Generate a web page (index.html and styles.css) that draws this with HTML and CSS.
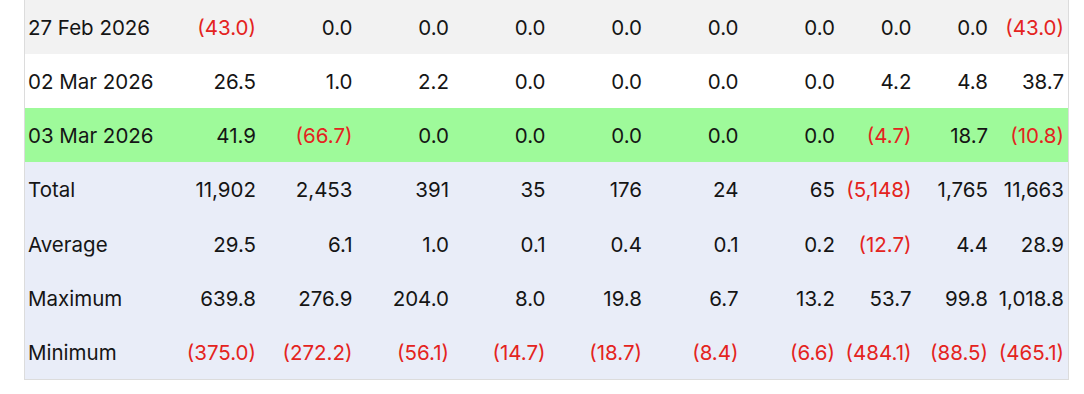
FILE: index.html
```html
<!DOCTYPE html>
<html lang="en">
<head>
<meta charset="utf-8">
<title>Daily table</title>
<link rel="stylesheet" href="styles.css">
</head>
<body>
<div class="wrap">
<table class="grid">
<colgroup>
<col class="c-date"><col class="c-wide"><col class="c-wide"><col class="c-wide"><col class="c-wide"><col class="c-wide"><col class="c-wide"><col class="c-wide"><col class="c-narrow"><col class="c-narrow"><col class="c-narrow">
</colgroup>
<tbody>
<tr class="r-grey r-first">
<td class="lbl">27 Feb 2026</td><td class="neg">(43.0)</td><td>0.0</td><td>0.0</td><td>0.0</td><td>0.0</td><td>0.0</td><td>0.0</td><td>0.0</td><td>0.0</td><td class="neg">(43.0)</td>
</tr>
<tr class="r-white">
<td class="lbl">02 Mar 2026</td><td>26.5</td><td>1.0</td><td>2.2</td><td>0.0</td><td>0.0</td><td>0.0</td><td>0.0</td><td>4.2</td><td>4.8</td><td>38.7</td>
</tr>
<tr class="r-green">
<td class="lbl">03 Mar 2026</td><td>41.9</td><td class="neg">(66.7)</td><td>0.0</td><td>0.0</td><td>0.0</td><td>0.0</td><td>0.0</td><td class="neg">(4.7)</td><td>18.7</td><td class="neg">(10.8)</td>
</tr>
<tr class="r-sum">
<td class="lbl">Total</td><td>11,902</td><td>2,453</td><td>391</td><td>35</td><td>176</td><td>24</td><td>65</td><td class="neg">(5,148)</td><td>1,765</td><td>11,663</td>
</tr>
<tr class="r-sum">
<td class="lbl">Average</td><td>29.5</td><td>6.1</td><td>1.0</td><td>0.1</td><td>0.4</td><td>0.1</td><td>0.2</td><td class="neg">(12.7)</td><td>4.4</td><td>28.9</td>
</tr>
<tr class="r-sum">
<td class="lbl">Maximum</td><td>639.8</td><td>276.9</td><td>204.0</td><td>8.0</td><td>19.8</td><td>6.7</td><td>13.2</td><td>53.7</td><td>99.8</td><td>1,018.8</td>
</tr>
<tr class="r-sum">
<td class="lbl">Minimum</td><td class="neg">(375.0)</td><td class="neg">(272.2)</td><td class="neg">(56.1)</td><td class="neg">(14.7)</td><td class="neg">(18.7)</td><td class="neg">(8.4)</td><td class="neg">(6.6)</td><td class="neg">(484.1)</td><td class="neg">(88.5)</td><td class="neg">(465.1)</td>
</tr>
</tbody>
</table>
</div>
</body>
</html>
```
FILE: styles.css
```css
html, body {
  margin: 0;
  padding: 0;
  background: #ffffff;
}

.wrap {
  padding-left: 24px;
}

.grid {
  border-collapse: collapse;
  table-layout: fixed;
  width: 1044px;
  font-family: Inter, "Noto Sans", sans-serif;
  font-size: 20.5px;
  color: #151515;
  border-left: 1px solid #dcdcdc;
  border-right: 1px solid #dcdcdc;
  border-bottom: 1px solid #dcdcdc;
}

.c-date { width: 139px; }
.c-wide { width: 96.5px; }
.c-narrow { width: 76.5px; }

.grid td {
  height: 54.4px;
  padding: 1px 4px 0 4px;
  text-align: right;
  white-space: nowrap;
  box-sizing: border-box;
}

.grid td.lbl {
  text-align: left;
  padding-left: 3px;
}

.r-first td { height: 53.5px; }

.r-grey { background: #f2f2f2; }
.r-white { background: #ffffff; }
.r-green { background: #9efa9a; }
.r-sum { background: #e9edf8; }

.neg { color: #e42320; }
```
